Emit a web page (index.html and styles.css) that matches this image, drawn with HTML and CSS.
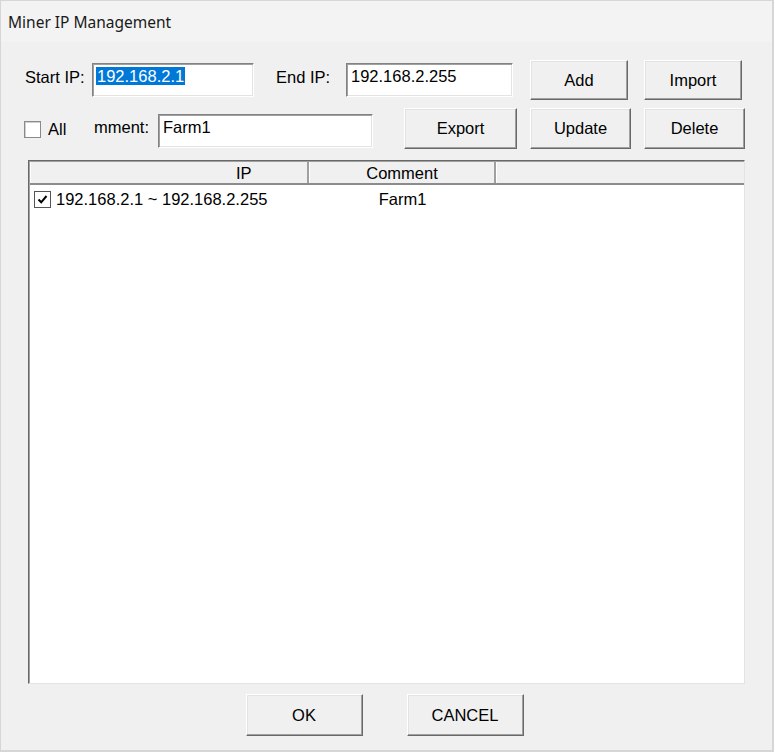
FILE: index.html
```html
<!DOCTYPE html>
<html lang="en">
<head>
  <meta charset="UTF-8">
  <title>Miner IP Management</title>
  <link rel="stylesheet" href="styles.css">
</head>
<body>
  <div class="window">
    <div class="titlebar">Miner IP Management</div>

    <div class="dialog">
      <div class="row row-ip">
        <label class="label label-start">Start IP:</label>
        <div class="field field-start"><span class="selected">192.168.2.1</span></div>
        <label class="label label-end">End IP:</label>
        <div class="field field-end">192.168.2.255</div>
        <button class="btn btn-add">Add</button>
        <button class="btn btn-import">Import</button>
      </div>

      <div class="row row-comment">
        <div class="check-all">
          <span class="checkbox"></span>
          <span class="check-text">All</span>
        </div>
        <label class="label label-comment">mment:</label>
        <div class="field field-comment">Farm1</div>
        <button class="btn btn-export">Export</button>
        <button class="btn btn-update">Update</button>
        <button class="btn btn-delete">Delete</button>
      </div>

      <div class="list">
        <div class="list-head">
          <div class="col col-ip">IP</div>
          <div class="col col-comment">Comment</div>
          <div class="col col-rest"></div>
        </div>
        <div class="list-row">
          <div class="cell cell-ip">
            <span class="checkbox checked">
              <svg width="13" height="13" viewBox="0 0 13 13"><path d="M2.5 6.5 L5.2 9.3 L10.5 3" fill="none" stroke="#000" stroke-width="2"/></svg>
            </span>
            192.168.2.1 ~ 192.168.2.255
          </div>
          <div class="cell cell-comment">Farm1</div>
        </div>
      </div>

      <div class="footer">
        <button class="btn btn-ok">OK</button>
        <button class="btn btn-cancel">CANCEL</button>
      </div>
    </div>
  </div>
</body>
</html>
```

FILE: styles.css
```css
* { margin: 0; padding: 0; box-sizing: border-box; }
body {
  background: #ffffff;
  font-family: 'Liberation Sans', Arial, sans-serif;
  font-size: 16.5px;
  color: #000;
}
.window {
  width: 774px;
  height: 752px;
  border: 1px solid #d6d6d6;
  border-right-width: 2px;
  border-bottom-width: 2px;
  background: #f0f0f0;
  display: flex;
  flex-direction: column;
}
.titlebar {
  height: 41px;
  background: #f3f3f3;
  display: flex;
  align-items: center;
  padding-left: 7px;
  font-family: 'Noto Sans', 'Open Sans', sans-serif;
  font-size: 15.5px;
  color: #1a1a1a;
}
.dialog {
  flex: 1;
  display: flex;
  flex-direction: column;
}

/* rows of controls */
.row {
  display: flex;
  align-items: center;
}
.row-ip { margin-top: 18px; height: 40px; }
.row-comment { margin-top: 8px; height: 41px; }

.label {
  white-space: nowrap;
  padding-bottom: 6px;
}
.label-start { margin-left: 24px; width: 67px; }
.label-end { margin-left: 22px; width: 70px; }
.label-comment { width: 64px; padding-bottom: 2px; }

.field {
  height: 34px;
  background: #fff;
  border: 1px solid;
  border-color: #828282 #ffffff #ffffff #828282;
  box-shadow: inset 1px 1px 0 #a0a0a0, inset -1px -1px 0 #e3e3e3;
  padding: 2px 4px;
  line-height: 20px;
  white-space: nowrap;
  align-self: center;
}
.field-start { width: 162px; padding-left: 3px; }
.field-end { width: 167px; }
.field-comment { width: 215px; margin-top: 4px; }
.selected {
  background: #0078d7;
  color: #fff;
  padding: 0 1px;
}

.btn {
  font-family: 'Liberation Sans', Arial, sans-serif;
  font-size: 16.5px;
  color: #000;
  background: #f0f0f0;
  border: 1px solid;
  border-color: #ffffff #696969 #696969 #ffffff;
  box-shadow: inset -1px -1px 0 #a0a0a0, inset 1px 1px 0 #e3e3e3;
  height: 40px;
}
.btn-add { margin-left: 17px; width: 98px; }
.btn-import { margin-left: 16px; width: 98px; }
.btn-export { margin-left: 31px; width: 113px; height: 41px; }
.btn-update { margin-left: 13px; width: 101px; height: 41px; }
.btn-delete { margin-left: 13px; width: 101px; height: 41px; }

.check-all {
  width: 70px;
  margin-left: 23px;
  display: flex;
  align-items: center;
  margin-top: 2px;
}
.checkbox {
  width: 17px;
  height: 17px;
  background: #fff;
  border: 1px solid #8a8a8a;
  box-shadow: inset 1px 1px 0 #d0d0d0;
  display: inline-flex;
  align-items: center;
  justify-content: center;
  flex-shrink: 0;
}
.check-text { margin-left: 7px; }

/* list view */
.list {
  margin: 11px 0 0 27px;
  width: 717px;
  height: 524px;
  background: #fff;
  border: 1px solid;
  border-color: #696969 #e3e3e3 #e3e3e3 #696969;
  box-shadow: inset 1px 1px 0 #a0a0a0;
}
.list-head {
  display: flex;
  height: 24px;
  background: #f0f0f0;
  border-top: 1px solid #a0a0a0;
  border-bottom: 2px solid #8c8c8c;
  margin-left: 1px;
}
.col {
  display: flex;
  align-items: center;
  border-right: 2px solid #a0a0a0;
  border-left: 1px solid #ffffff;
  line-height: 20px;
}
.col-ip { width: 279px; padding-left: 205px; }
.col-comment { width: 187px; justify-content: center; }
.col-rest { flex: 1; border-right: none; }

.list-row {
  display: flex;
  align-items: center;
  height: 28px;
}
.cell { white-space: nowrap; }
.cell-ip {
  width: 280px;
  display: flex;
  align-items: center;
  gap: 5px;
  padding-left: 5px;
}
.checkbox.checked {
  border-color: #555;
  box-shadow: none;
}
.cell-comment { width: 187px; text-align: center; }

/* bottom buttons */
.footer {
  display: flex;
  justify-content: center;
  gap: 44px;
  margin-top: 10px;
  padding-right: 4px;
}
.btn-ok { width: 117px; height: 42px; }
.btn-cancel { width: 117px; height: 42px; }
```
